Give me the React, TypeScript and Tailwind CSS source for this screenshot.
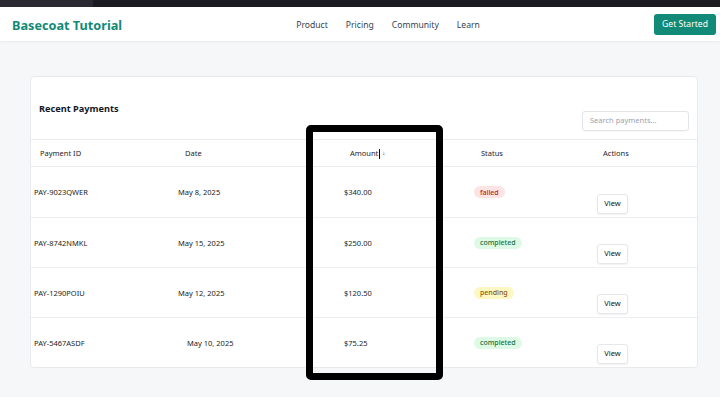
import React from 'react';

type Payment = {
  id: string;
  date: string;
  amount: string;
  status: 'failed' | 'completed' | 'pending';
  dateOffset?: boolean;
};

const payments: Payment[] = [
  { id: 'PAY-9023QWER', date: 'May 8, 2025', amount: '$340.00', status: 'failed' },
  { id: 'PAY-8742NMKL', date: 'May 15, 2025', amount: '$250.00', status: 'completed' },
  { id: 'PAY-1290POIU', date: 'May 12, 2025', amount: '$120.50', status: 'pending' },
  { id: 'PAY-5467ASDF', date: 'May 10, 2025', amount: '$75.25', status: 'completed', dateOffset: true },
];

const badgeStyles: Record<Payment['status'], string> = {
  failed: 'bg-[#fde3e3] text-[#b42323]',
  completed: 'bg-[#dcfae6] text-[#17703f]',
  pending: 'bg-[#fdf7c3] text-[#8a5a12]',
};

const cols = 'grid grid-cols-[144px_166px_130px_123px_1fr] pl-[3px]';

function StatusBadge({ status }: { status: Payment['status'] }) {
  return (
    <span
      className={`inline-flex h-[12px] items-center rounded-full px-[6px] text-[7px] leading-none font-medium ${badgeStyles[status]}`}
    >
      {status}
    </span>
  );
}

export default function App() {
  return (
    <div className="relative h-[397px] w-[720px] overflow-hidden bg-[#f6f7f9] font-['Noto_Sans',sans-serif] text-[#1f2328]">
      {/* ブラウザ上端 */}
      <div className="flex h-[7px]">
        <div className="w-[93px] bg-[#2b2a33]" />
        <div className="flex-1 bg-[#1c1b22]" />
      </div>

      {/* ヘッダー */}
      <header className="flex h-[34px] items-center justify-between bg-white pl-[12px] pr-[4px] shadow-[0_1px_3px_rgba(0,0,0,0.06)]">
        <span className="mt-[3px] text-[12.7px] font-bold text-[#118a78]">Basecoat Tutorial</span>
        <nav className="mt-[3px] flex items-center gap-[18px] text-[8.6px] text-[#374151]">
          <span>Product</span>
          <span>Pricing</span>
          <span>Community</span>
          <span>Learn</span>
        </nav>
        <button className="h-[21px] w-[62px] rounded-[3px] bg-[#118a78] text-[8.6px] text-white">
          Get Started
        </button>
      </header>

      {/* カード */}
      <main className="pl-[30px] pr-[22px] pt-[35px]">
        <div className="overflow-hidden rounded-[4px] border border-[#e7e9ec] bg-white">
          <div className="flex h-[62px] items-end justify-between px-[8px] pb-[8px]">
            <h2 className="mb-[15px] text-[9.2px] font-bold text-[#111827]">Recent Payments</h2>
            <div className="flex h-[20px] w-[107px] items-center rounded-[3px] border border-[#e3e5e8] px-[7px] text-[7.5px] text-[#9ca3af] shadow-[0_1px_1px_rgba(0,0,0,0.03)]">
              Search payments...
            </div>
          </div>

          {/* テーブルヘッダー */}
          <div className={`${cols} h-[28px] items-center border-y border-[#e9ebee] pt-[1px] text-[7.5px] text-[#1f2328]`}>
            <span className="pl-[6px]">Payment ID</span>
            <span className="pl-[7px]">Date</span>
            <span className="flex items-center pl-[6px]">
              Amount
              <span className="ml-[1px] h-[10px] w-[1px] bg-[#111]" />
              <span className="ml-[2px] text-[6px]">↓</span>
            </span>
            <span className="pl-[7px]">Status</span>
            <span className="pl-[6px]">Actions</span>
          </div>

          {/* 行 */}
          {payments.map((p, i) => (
            <div
              key={p.id}
              className={`${cols} h-[50px] text-[7.5px] text-[#1a1d21] ${i > 0 ? 'border-t border-[#eceef0]' : ''}`}
            >
              <span className="self-center pt-[2px]">{p.id}</span>
              <span className={`self-center pt-[2px] ${p.dateOffset ? 'pl-[9px]' : ''}`}>{p.date}</span>
              <span className="self-center pt-[2px]">{p.amount}</span>
              <span className="self-center">
                <StatusBadge status={p.status} />
              </span>
              <span className="flex items-end pb-[3px]">
                <button className="h-[20px] w-[31px] rounded-[3px] border border-[#e5e7eb] bg-white text-[7.5px] text-[#111] shadow-[0_1px_2px_rgba(0,0,0,0.06)]">
                  View
                </button>
              </span>
            </div>
          ))}
        </div>
      </main>

      {/* 注釈の枠 */}
      <div className="absolute left-[306px] top-[125px] h-[255px] w-[137px] rounded-[5px] border-[7px] border-black" />
    </div>
  );
}
